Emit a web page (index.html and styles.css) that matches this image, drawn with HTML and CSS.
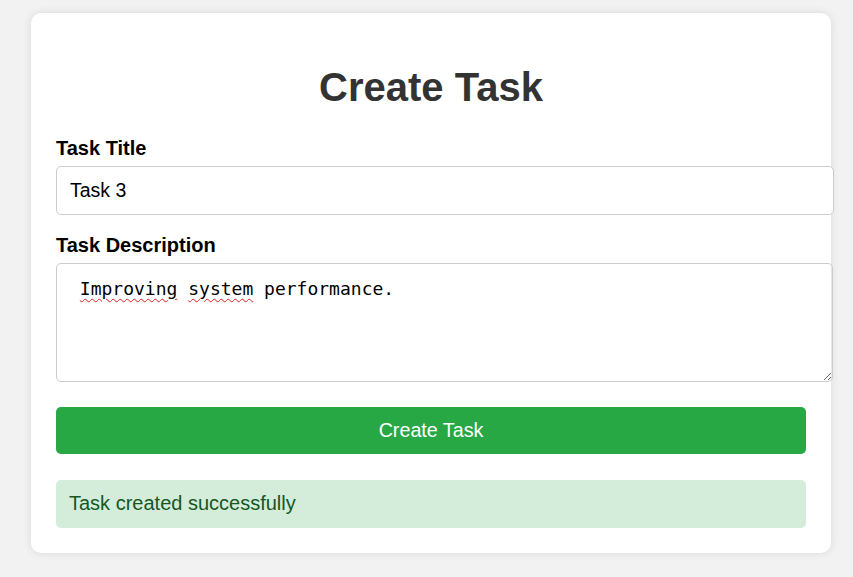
FILE: index.html
```html
<!DOCTYPE html>
<html lang="en">
<head>
  <meta charset="UTF-8">
  <meta name="viewport" content="width=device-width, initial-scale=1.0">
  <title>Create Task</title>
  <link rel="stylesheet" href="styles.css">
</head>
<body>
  <div class="container">
    <h1>Create Task</h1>
    <form class="task-form">
      <label for="taskTitle">Task Title</label>
      <input type="text" id="taskTitle" value="Task 3">

      <label for="taskDescription">Task Description</label>
      <!-- styled like a textarea so the spellcheck marks show -->
      <div class="textarea" id="taskDescription" role="textbox" contenteditable="true"> <span class="misspelled">Improving</span> <span class="misspelled">system</span> performance.</div>

      <button type="button">Create Task</button>
    </form>
    <div class="message success">Task created successfully</div>
  </div>
</body>
</html>
```

FILE: styles.css
```css
body {
  margin: 0;
  padding: 13px 31px;
  font-family: "Liberation Sans", Arial, sans-serif;
  background-color: #f2f2f2;
}

.container {
  width: 750px;
  padding: 25px;
  background-color: #fff;
  border-radius: 10px;
  box-shadow: 0 0 10px rgba(0, 0, 0, 0.1);
}

h1 {
  font-size: 40px;
  text-align: center;
  color: #333;
  margin: 27px 0 27px;
}

label {
  display: block;
  font-size: 20px;
  font-weight: bold;
  margin-bottom: 6px;
}

input[type="text"] {
  display: block;
  width: 100%;
  padding: 12px 13px;
  margin: 0 0 19px;
  font-family: "Liberation Sans", Arial, sans-serif;
  font-size: 19.5px;
  border: 1px solid #ccc;
  border-radius: 5px;
}

.textarea {
  height: 91px;
  width: 100%;
  padding: 14px 13px 12px 12px;
  margin-bottom: 25px;
  font-family: "DejaVu Sans Mono", monospace;
  font-size: 18px;
  line-height: 21px;
  white-space: pre-wrap;
  border: 1px solid #ccc;
  border-radius: 5px;
  overflow: auto;
  resize: vertical;
  outline: none;
}

.misspelled {
  text-decoration: underline wavy #e02020;
  text-decoration-thickness: 1px;
  text-underline-offset: 3px;
}

button {
  display: block;
  width: 100%;
  padding: 12px;
  font-family: "Liberation Sans", Arial, sans-serif;
  font-size: 19.7px;
  color: #fff;
  background-color: #28a745;
  border: none;
  border-radius: 5px;
  cursor: pointer;
}

.message {
  margin-top: 26px;
  padding: 12px 13px 13px;
  font-size: 20px;
  border-radius: 5px;
}

.success {
  background-color: #d4edda;
  color: #155724;
}
```
